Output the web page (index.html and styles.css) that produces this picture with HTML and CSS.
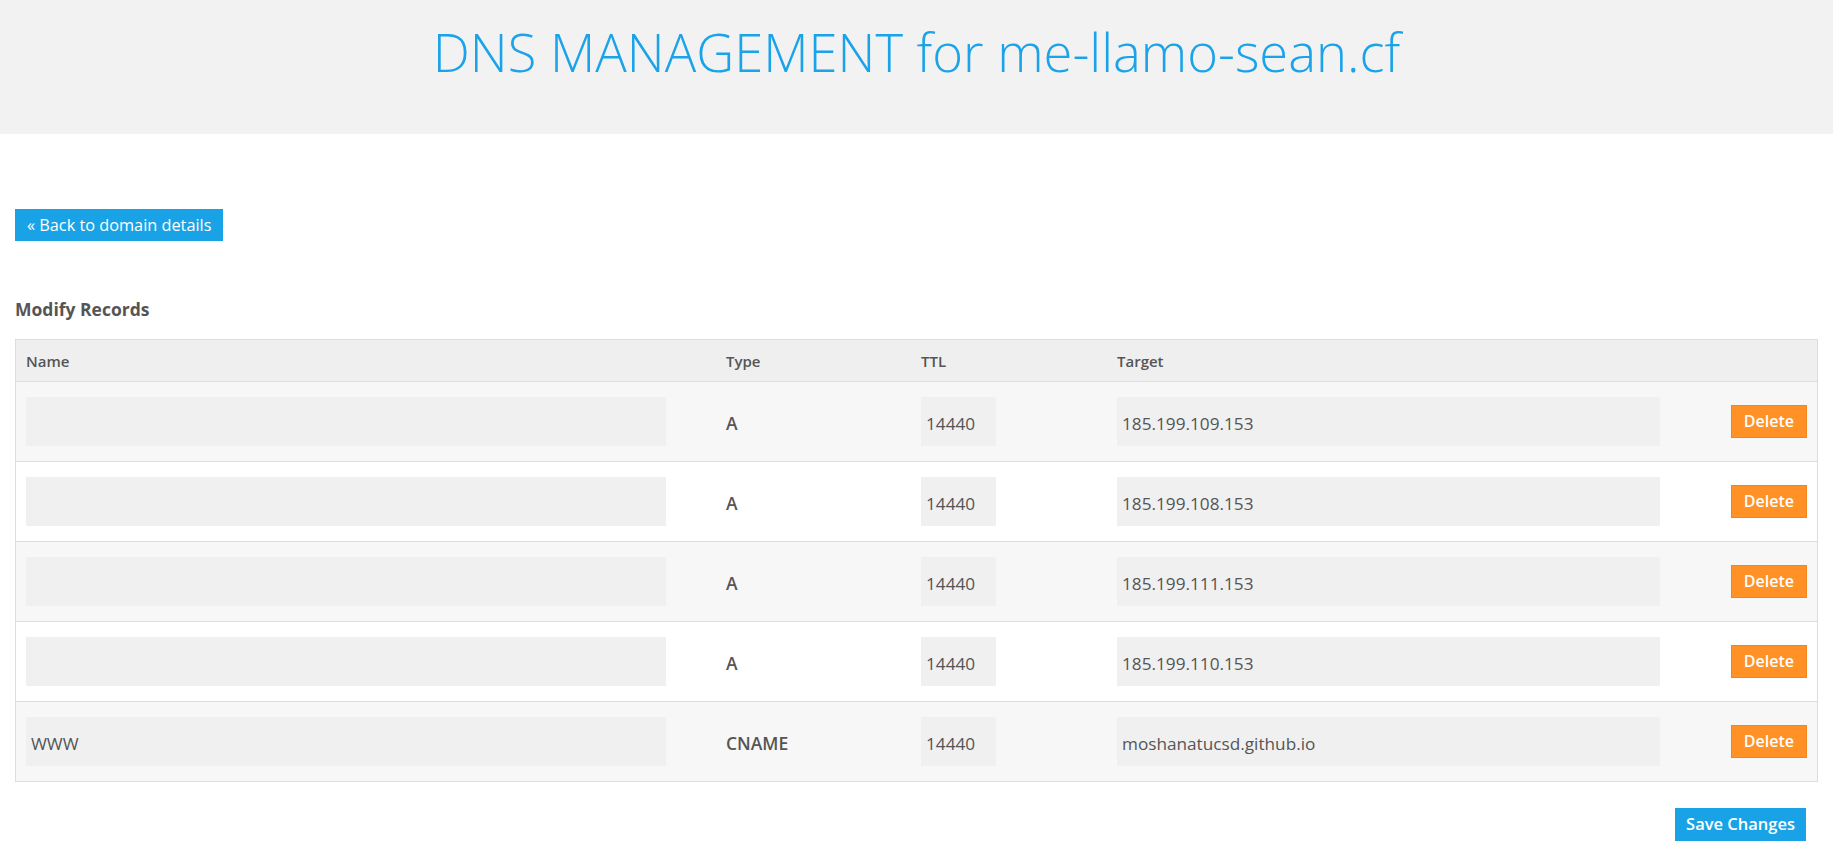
FILE: index.html
```html
<!DOCTYPE html>
<html lang="en">
<head>
<meta charset="utf-8">
<title>DNS Management</title>
<link rel="stylesheet" href="styles.css">
</head>
<body>
<header class="page-head">
  <h1 class="page-title">DNS MANAGEMENT for me-llamo-sean.cf</h1>
</header>
<main class="content">
  <a class="btn btn-blue btn-back" href="#">« Back to domain details</a>
  <h4 class="section-title">Modify Records</h4>
  <div class="records">
    <div class="rec-head">
      <div class="cell">Name</div>
      <div class="cell">Type</div>
      <div class="cell">TTL</div>
      <div class="cell">Target</div>
      <div class="cell"></div>
    </div>
    <div class="rec-row">
      <div class="cell"><div class="field field-name"></div></div>
      <div class="cell type">A</div>
      <div class="cell"><div class="field field-ttl">14440</div></div>
      <div class="cell"><div class="field field-target">185.199.109.153</div></div>
      <div class="cell action"><a class="btn btn-orange" href="#">Delete</a></div>
    </div>
    <div class="rec-row">
      <div class="cell"><div class="field field-name"></div></div>
      <div class="cell type">A</div>
      <div class="cell"><div class="field field-ttl">14440</div></div>
      <div class="cell"><div class="field field-target">185.199.108.153</div></div>
      <div class="cell action"><a class="btn btn-orange" href="#">Delete</a></div>
    </div>
    <div class="rec-row">
      <div class="cell"><div class="field field-name"></div></div>
      <div class="cell type">A</div>
      <div class="cell"><div class="field field-ttl">14440</div></div>
      <div class="cell"><div class="field field-target">185.199.111.153</div></div>
      <div class="cell action"><a class="btn btn-orange" href="#">Delete</a></div>
    </div>
    <div class="rec-row">
      <div class="cell"><div class="field field-name"></div></div>
      <div class="cell type">A</div>
      <div class="cell"><div class="field field-ttl">14440</div></div>
      <div class="cell"><div class="field field-target">185.199.110.153</div></div>
      <div class="cell action"><a class="btn btn-orange" href="#">Delete</a></div>
    </div>
    <div class="rec-row">
      <div class="cell"><div class="field field-name">WWW</div></div>
      <div class="cell type">CNAME</div>
      <div class="cell"><div class="field field-ttl">14440</div></div>
      <div class="cell"><div class="field field-target">moshanatucsd.github.io</div></div>
      <div class="cell action"><a class="btn btn-orange" href="#">Delete</a></div>
    </div>
  </div>
  <div class="form-actions">
    <a class="btn btn-blue btn-save" href="#">Save Changes</a>
  </div>
</main>
</body>
</html>
```
FILE: styles.css
```css
html, body {
  margin: 0;
  padding: 0;
  background: #ffffff;
  font-family: "Open Sans", "Liberation Sans", sans-serif;
  color: #555555;
}

.page-head {
  height: 134px;
  background: #f2f2f2;
  box-sizing: border-box;
  padding-top: 16px;
}

.page-title {
  margin: 0;
  text-align: center;
  font-size: 52.5px;
  font-weight: 300;
  line-height: normal;
  color: #1aa3e8;
}

.content {
  padding: 75px 15px 0;
}

.btn {
  display: inline-block;
  text-decoration: none;
  color: #ffffff;
  box-sizing: border-box;
}

.btn-blue {
  background: #19a3e6;
}

.btn-back {
  height: 32px;
  line-height: 32px;
  padding: 0 12px;
  font-size: 16.3px;
  font-weight: 400;
}

.section-title {
  margin: 56px 0 18px;
  font-size: 17.5px;
  font-weight: 700;
  line-height: 24px;
  color: #555555;
}

.records {
  border: 1px solid #dddddd;
}

.rec-head,
.rec-row {
  display: grid;
  grid-template-columns: 700px 195px 196px 563px 1fr;
  align-items: center;
}

.rec-head {
  height: 41px;
  background: #efefef;
  font-size: 15px;
  font-weight: 600;
}

.rec-row {
  border-top: 1px solid #dddddd;
  padding: 15px 0;
  height: 49px;
  font-size: 17.2px;
}

.rec-row:nth-child(even) {
  background: #f7f7f7;
}

.rec-row:nth-child(odd) {
  background: #ffffff;
}

.cell {
  padding: 0 10px;
}

.type {
  padding-top: 2px;
  font-size: 17.5px;
  font-weight: 600;
}

.field {
  box-sizing: border-box;
  height: 49px;
  line-height: 45px;
  padding: 4px 5px 0;
  background: #f0f0f0;
  color: #555555;
  white-space: nowrap;
}

.field-name {
  width: 640px;
}

.field-ttl {
  width: 75px;
}

.field-target {
  width: 543px;
}

.action {
  text-align: right;
}

.btn-orange {
  height: 33px;
  line-height: 31px;
  padding: 0 12px;
  background: #ff9126;
  border: 1px solid #f0861c;
  font-size: 16px;
  font-weight: 600;
}

.form-actions {
  margin-top: 26px;
  padding-right: 12px;
  text-align: right;
}

.btn-save {
  height: 33px;
  line-height: 31px;
  padding: 0 11px;
  font-size: 16.5px;
  font-weight: 600;
}
```
